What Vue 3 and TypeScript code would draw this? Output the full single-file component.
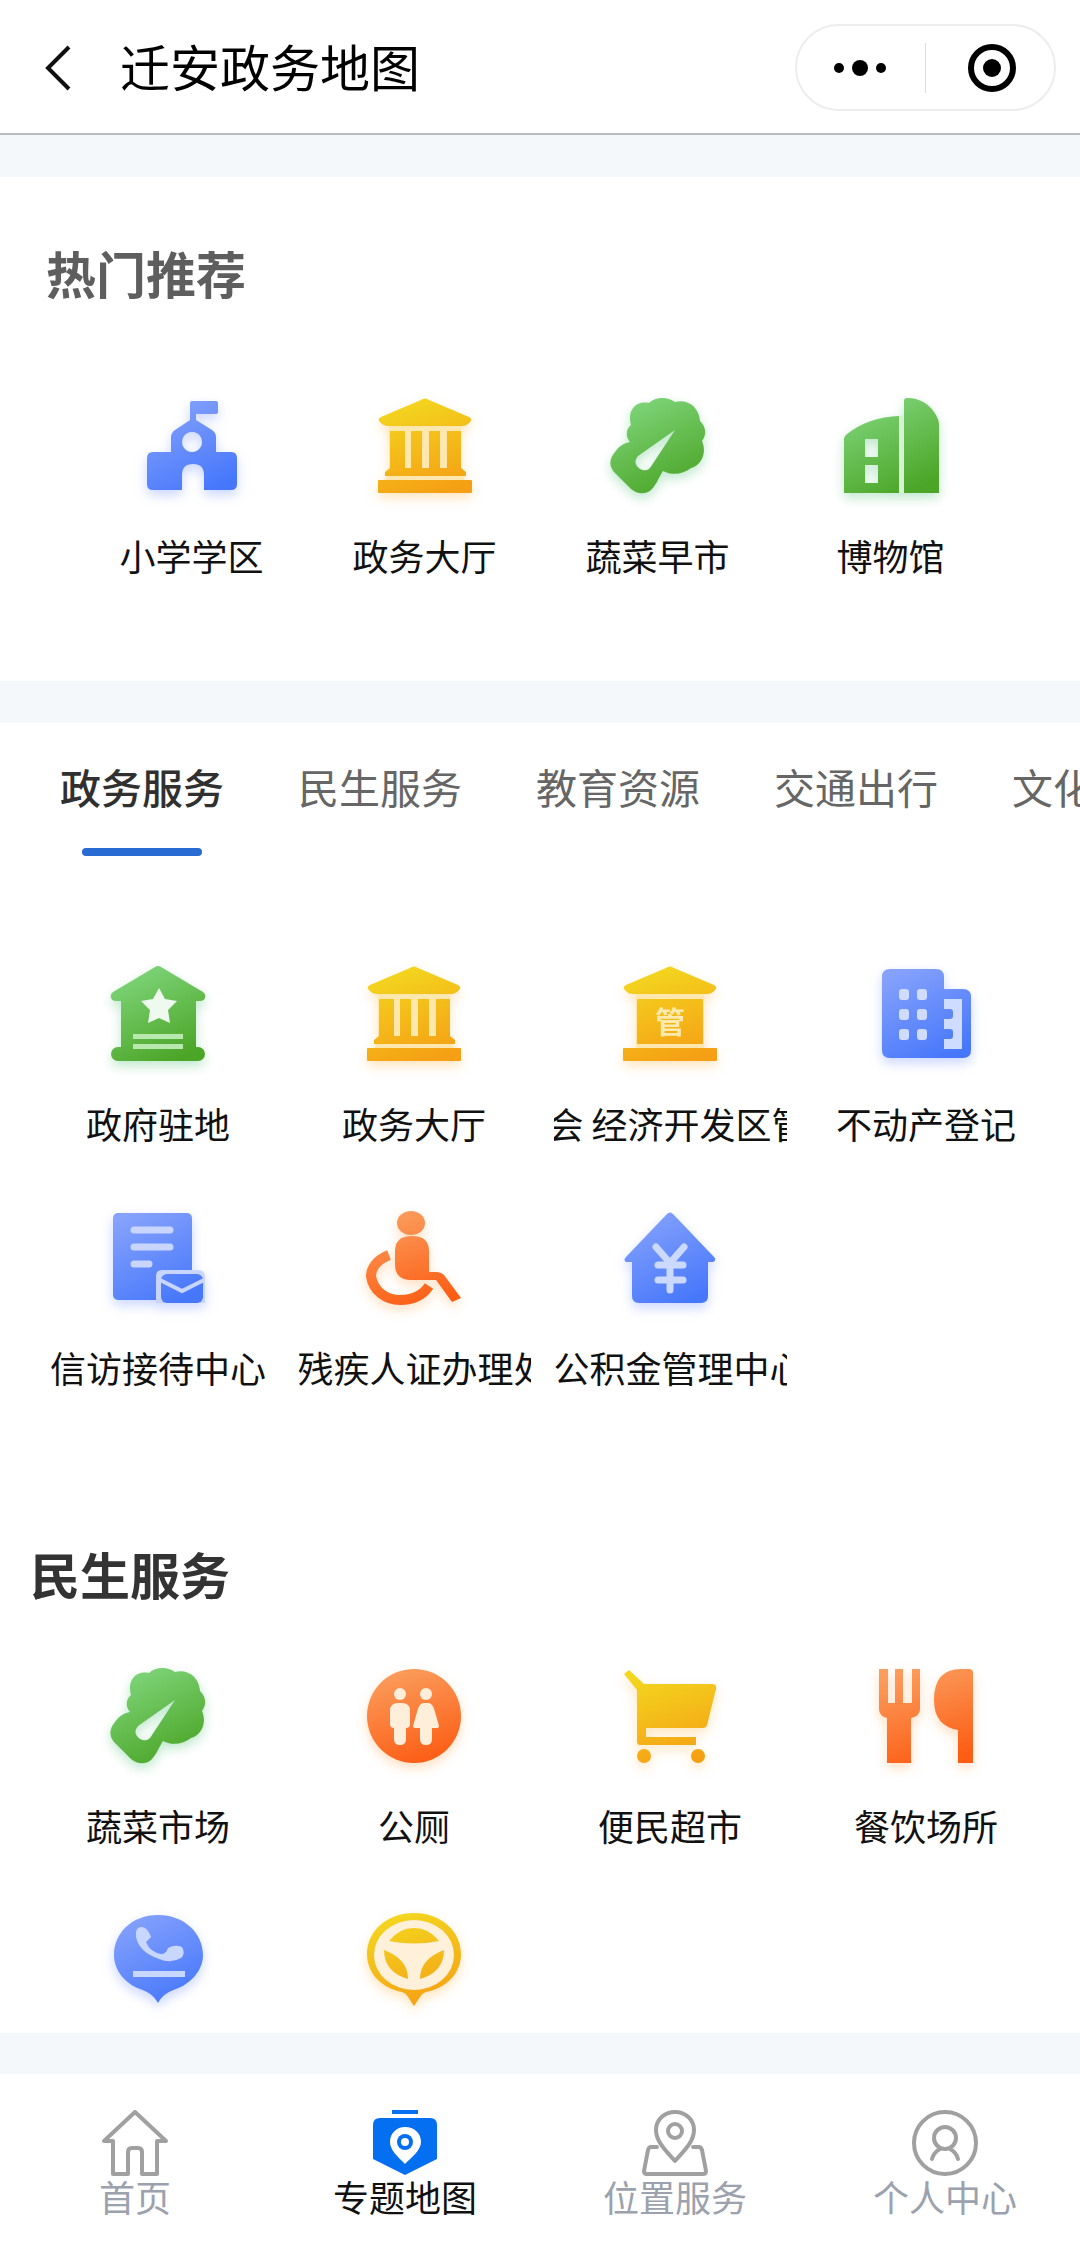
<script setup lang="ts">
import { ref } from 'vue'

type Tone = 'blue' | 'yellow' | 'green' | 'orange'

interface Service {
  icon: string
  label?: string
  /** Current scroll position of a label that is wider than its cell. */
  scroll?: number
}

interface Icon {
  tone: Tone
  art: string
}

const icons: Record<string, Icon> = {
  school: {
    tone: 'blue',
    art: `<path fill-rule="evenodd" d="M58 18q0-2 2-2h24q2 0 2 2v9q0 2-2 2H64v6l16 10q4 3 4 7v15h15q6 0 6 6v26q0 6-6 6H72V90q0-11-11-11T50 90v15H21q-6 0-6-6V73q0-6 6-6h18V52q0-4 4-7l15-10zM60 47a10 10 0 1 0 0.1 0z"/>`,
  },
  hall: {
    tone: 'yellow',
    art: `<path fill="#ffe7ae" d="M24 40h72v46l4 10H20l4-10z"/>
      <path d="M56 15q4-3 8 0l40 17q4 2 1 5-3 4-8 4H23q-5 0-8-4-3-3 1-5z"/>
      <path d="M25 46h15v37h6V46h11v37h7V46h11v37h7V46h14v37l5 4v4H20v-4l5-4z"/>
      <rect x="13" y="95" width="94" height="13" rx="1"/>`,
  },
  vegetable: {
    tone: 'green',
    art: `<path fill-rule="evenodd" d="M32 57C27 51 28 44 33 40 29 26 37 15 51 18 57 12 69 11 77 17 90 14 101 22 102 36 108 42 109 49 104 56 109 67 104 80 93 83 85 89 75 91 65 86 61 92 59 99 53 105 47 110 39 109 33 104L16 87C11 81 11 74 17 67 21 61 26 58 32 57zM77 45L40 71Q34 78 42 84 50 88 54 80z"/>`,
  },
  museum: {
    tone: 'green',
    art: `<path fill="#d5f3d2" d="M67 31h7v77h-7z"/>
      <path fill-rule="evenodd" d="M13 54q0-3 3-5 22-17 52-18v77H13zM34 54v18h13V54zM34 80v18h13V80z"/>
      <path d="M73 16q0-3 3-3 19 0 29 17 3 5 3 9v69H73z"/>`,
  },
  government: {
    tone: 'green',
    art: `<path d="M57 14q3-2 6 0l42 25q3 2 2 6-1 3-5 3h-4v46h2a7 7 0 0 1 0 14H20a7 7 0 0 1 0-14h3V48h-5q-4 0-5-3-1-4 2-6z"/>
      <path fill="#eefaf0" d="M61 35l6 11 12 2-9 9 2 13-11-5-11 5 2-13-9-9 12-2z"/>
      <path fill="#b9e8ae" d="M35 81h50v5H35zM35 91h50v5H35z"/>`,
  },
  committee: {
    tone: 'yellow',
    art: `<path fill="#ffe7ae" d="M26 40h68v56H26z"/>
      <path d="M56 15q4-3 8 0l40 17q4 2 1 5-3 4-8 4H23q-5 0-8-4-3-3 1-5z"/>
      <rect x="27" y="46" width="66" height="45" rx="1"/>
      <rect x="13" y="95" width="94" height="13" rx="1"/>
      <text x="60" y="80" font-size="30" font-weight="700" text-anchor="middle" fill="#ffeaae">管</text>`,
  },
  property: {
    tone: 'blue',
    art: `<path d="M24 16h46q8 0 8 8v12h19q8 0 8 8v53q0 8-8 8H24q-8 0-8-8V24q0-8 8-8z"/>
      <path fill="#cfdcff" d="M78 46h18v50H78V86h6q3 0 3-3v-4q0-3-3-3h-6V66h6q3 0 3-3v-4q0-3-3-3h-6z"/>
      <g fill="#cfdcff"><rect x="33" y="36" width="10" height="11" rx="3"/><rect x="51" y="36" width="10" height="11" rx="3"/>
      <rect x="33" y="56" width="10" height="11" rx="3"/><rect x="51" y="56" width="10" height="11" rx="3"/>
      <rect x="33" y="76" width="10" height="11" rx="3"/><rect x="51" y="76" width="10" height="11" rx="3"/></g>`,
  },
  petition: {
    tone: 'blue',
    art: `<rect x="15" y="16" width="79" height="87" rx="5"/>
      <path fill="#c8d6ff" d="M58 106V79q0-6 6-6h36q7 0 7 7v26z"/>
      <g stroke="#c8d6ff" stroke-width="7" stroke-linecap="round"><path d="M36 33h36M36 50h36M36 67h15"/></g>
      <rect x="63" y="77" width="42" height="29" rx="6"/>
      <path d="M62 83l22 11 22-11" fill="none" stroke="#c8d6ff" stroke-width="4"/>`,
  },
  accessible: {
    tone: 'orange',
    art: `<ellipse cx="57" cy="26" rx="14" ry="12"/>
      <path d="M41 54q0-15 17-15t17 15v21h7q5 0 8 3l17 23-9 4-16-22H57q-16 0-16-16z"/>
      <path d="M35 58C22 63 17 72 17 79 19 94 32 103 46 103 59 103 69 98 75 89" fill="none" stroke="url(#tone-orange)" stroke-width="10"/>`,
  },
  fund: {
    tone: 'blue',
    art: `<path d="M57 17q3-3 6 0l41 43q3 3-1 5h-5v34q0 7-7 7H29q-7 0-7-7V65h-6q-3-2 0-5z"/>
      <path d="M46 50l14 16 14-16M48 68h25M48 83h25M60 66v27" fill="none" stroke="#cbd9ff" stroke-width="7" stroke-linecap="round"/>`,
  },
  toilet: {
    tone: 'orange',
    art: `<circle cx="60" cy="61" r="47"/>
      <g fill="#ffeeda"><circle cx="46" cy="39" r="6"/><circle cx="72" cy="39" r="6"/>
      <path d="M44 48h4q8 0 8 8v13q0 4-4 4v11q0 6-6 6t-6-6V73q-4 0-4-4V56q0-8 8-8z"/>
      <path d="M70 48h4q5 0 7 9l4 14q0 2-3 2h-4v11q0 6-6 6t-6-6V73h-4q-3 0-3-2l4-14q2-9 7-9z"/></g>`,
  },
  market: {
    tone: 'yellow',
    art: `<path fill-rule="evenodd" d="M14 19l5-4 15 14h68q5 0 4 5l-9 36q-1 3-4 3H36v9h50v8H30q-3 0-3-3V35z"/>
      <circle cx="34" cy="101" r="7"/><circle cx="88" cy="101" r="7"/>`,
  },
  dining: {
    tone: 'orange',
    art: `<path d="M13 14h9v34h7V14h8v34h9V14h8v40q0 7-9 9v45H21V63q-8-2-8-9z"/>
      <path d="M103 14q4 0 4 4v90H92V75Q68 71 68 45 68 14 95 14z"/>`,
  },
  hotline: {
    tone: 'blue',
    art: `<path d="M60 16c26 0 45 18 45 40 0 16-13 29-27 34-9 3-14 7-18 14-4-7-9-11-18-14-14-5-26-18-26-34 0-22 18-40 44-40z"/>
      <path fill="#c8d7ff" d="M38 38Q37 27 44 28 50 29 53 38L48 43Q52 53 63 55 68 55 70 49 77 45 84 48 88 55 83 59 73 65 61 60 41 53 38 38z"/>
      <path fill="#c8d7ff" d="M35 72h52v6H35z"/>`,
  },
  driving: {
    tone: 'yellow',
    art: `<path d="M60 14c27 0 47 18 47 41 0 20-15 34-35 38-6 2-8 9-12 14-4-5-6-12-12-14-20-4-35-18-35-38 0-23 20-41 47-41z"/>
      <ellipse cx="60" cy="56" rx="40" ry="35" fill="#fff0da"/>
      <path d="M35 42q10-13 25-13t25 13q-25 5-50 0zM30 51q0 22 24 29 0-20-24-29zM90 51q0 22-24 29 0-20 24-29z"/>`,
  },
}

const recommended: Service[] = [
  { icon: 'school', label: '小学学区' },
  { icon: 'hall', label: '政务大厅' },
  { icon: 'vegetable', label: '蔬菜早市' },
  { icon: 'museum', label: '博物馆' },
]

const governmentServices: Service[] = [
  { icon: 'government', label: '政府驻地' },
  { icon: 'hall', label: '政务大厅' },
  { icon: 'committee', label: '会 经济开发区管', scroll: 6 },
  { icon: 'property', label: '不动产登记' },
  { icon: 'petition', label: '信访接待中心' },
  { icon: 'accessible', label: '残疾人证办理处' },
  { icon: 'fund', label: '公积金管理中心' },
]

const livelihoodServices: Service[] = [
  { icon: 'vegetable', label: '蔬菜市场' },
  { icon: 'toilet', label: '公厕' },
  { icon: 'market', label: '便民超市' },
  { icon: 'dining', label: '餐饮场所' },
  { icon: 'hotline' },
  { icon: 'driving' },
]

const groups = [
  { title: '', items: governmentServices },
  { title: '民生服务', items: livelihoodServices },
]

const categories = ['政务服务', '民生服务', '教育资源', '交通出行', '文化旅游']
const activeCategory = ref(0)

const pages = [
  {
    label: '首页',
    art: `<path d="M33 2L2 31h9v33h15V42q0-4 4-4h6q4 0 4 4v22h15V31h9z"/>`,
  },
  {
    label: '专题地图',
    art: `<g fill="#046ff0" stroke="none"><path d="M20 0h26v4H20zM8 8h50q7 0 7 7v34L33 65 1 49V15q0-7 7-7z"/>
      <path fill="#fff" d="M33 17c9 0 16 6 16 15 0 8-9 15-16 22-7-7-15-14-15-22 0-9 7-15 15-15z"/>
      <circle cx="33" cy="32" r="8"/><circle cx="33" cy="32" r="4" fill="#fff"/></g>`,
  },
  {
    label: '位置服务',
    art: `<path d="M33 2c11 0 19 8 19 18 0 12-11 22-19 31-8-9-19-19-19-31C14 10 22 2 33 2z"/><circle cx="33" cy="21" r="7"/>
      <path d="M15 37H9q-2 0-3 3L2 61q0 3 3 3h56q3 0 3-3l-4-21q-1-3-3-3h-6"/>`,
  },
  {
    label: '个人中心',
    art: `<circle cx="33" cy="33" r="31"/><circle cx="33" cy="28" r="11"/><path d="M20 49q2-7 8-10M46 49q-2-7-8-10"/>`,
  },
]
const activePage = 1
</script>

<template>
  <div class="page">
    <svg class="tones" width="0" height="0" aria-hidden="true">
      <defs>
        <linearGradient id="tone-blue" gradientUnits="userSpaceOnUse" x1="35" y1="15" x2="80" y2="105">
          <stop offset="0" stop-color="#86a2fc" /><stop offset="1" stop-color="#4677fb" />
        </linearGradient>
        <linearGradient id="tone-yellow" gradientUnits="userSpaceOnUse" x1="45" y1="13" x2="75" y2="107">
          <stop offset="0" stop-color="#f3d71f" /><stop offset="1" stop-color="#f5a014" />
        </linearGradient>
        <linearGradient id="tone-green" gradientUnits="userSpaceOnUse" x1="35" y1="13" x2="80" y2="107">
          <stop offset="0" stop-color="#80d67c" /><stop offset="1" stop-color="#4ba526" />
        </linearGradient>
        <linearGradient id="tone-orange" gradientUnits="userSpaceOnUse" x1="45" y1="13" x2="75" y2="107">
          <stop offset="0" stop-color="#fb9d5d" /><stop offset="1" stop-color="#fc5d14" />
        </linearGradient>
      </defs>
    </svg>

    <header class="top-bar">
      <button class="back" type="button" aria-label="返回">
        <svg width="32" height="50" viewBox="0 0 32 50"><path d="M27 4L6 25l21 21" fill="none" stroke="#111" stroke-width="4" /></svg>
      </button>
      <h1>迁安政务地图</h1>
      <div class="capsule">
        <button type="button" aria-label="更多">
          <svg width="58" height="50" viewBox="0 0 58 50"><circle cx="7" cy="25" r="5" /><circle cx="28" cy="25" r="8" /><circle cx="49" cy="25" r="5" /></svg>
        </button>
        <span class="divider"></span>
        <button type="button" aria-label="关闭">
          <svg width="54" height="50" viewBox="0 0 54 50"><circle cx="29" cy="25" r="21" fill="none" stroke="#000" stroke-width="6" /><circle cx="29" cy="25" r="9" /></svg>
        </button>
      </div>
    </header>

    <section class="recommended">
      <h2>热门推荐</h2>
      <div class="grid">
        <a v-for="item in recommended" :key="item.icon" class="service" href="#">
          <svg class="icon" :class="icons[item.icon].tone" viewBox="0 0 120 120" v-html="icons[item.icon].art"></svg>
          <span class="label"><span>{{ item.label }}</span></span>
        </a>
      </div>
    </section>

    <main class="services">
      <div class="categories" role="tablist">
        <button
          v-for="(name, i) in categories"
          :key="name"
          type="button"
          role="tab"
          :aria-selected="i === activeCategory"
          :class="{ active: i === activeCategory }"
          @click="activeCategory = i"
        >
          {{ name }}
        </button>
      </div>
      <div v-for="(group, g) in groups" :key="g" class="group">
        <h2 v-if="group.title">{{ group.title }}</h2>
        <div class="grid">
          <a v-for="item in group.items" :key="item.icon" class="service" href="#">
            <svg class="icon" :class="icons[item.icon].tone" viewBox="0 0 120 120" v-html="icons[item.icon].art"></svg>
            <span v-if="item.label" class="label">
              <span :style="item.scroll ? { marginLeft: `-${item.scroll}px` } : undefined">{{ item.label }}</span>
            </span>
          </a>
        </div>
      </div>
    </main>

    <nav class="tab-bar">
      <a v-for="(page, i) in pages" :key="page.label" href="#" :class="{ active: i === activePage }">
        <svg viewBox="0 0 66 66" v-html="page.art"></svg>
        <span>{{ page.label }}</span>
      </a>
    </nav>
  </div>
</template>

<style>
body {
  margin: 0;
  background: #f4f8fb;
}
</style>

<style scoped>
.page {
  display: flex;
  flex-direction: column;
  min-height: 100vh;
  overflow: hidden;
  background: #f4f8fb;
  color: #111;
  font-family: "Noto Sans CJK SC", "Noto Sans", sans-serif;
  font-size: 36px;
}

.tones {
  position: absolute;
}

button {
  padding: 0;
  border: 0;
  background: none;
  font: inherit;
  color: inherit;
}

a {
  color: inherit;
  text-decoration: none;
}

h1,
h2 {
  margin: 0;
  font-size: 50px;
  line-height: 70px;
}

svg {
  display: block;
}

.top-bar {
  display: flex;
  align-items: center;
  box-sizing: border-box;
  height: 135px;
  padding: 2px 24px 0 42px;
  border-bottom: 2px solid #b9bcbe;
  background: #fff;
}

h1 {
  flex: 1;
  margin: 0 0 6px 46px;
  font-weight: 400;
  color: #000;
}

.capsule {
  display: flex;
  align-items: center;
  box-sizing: border-box;
  width: 261px;
  height: 87px;
  border: 2px solid #ededed;
  border-radius: 44px;
}

.capsule button {
  display: flex;
  flex: 1;
  justify-content: center;
}

.divider {
  width: 1px;
  height: 50px;
  background: #dcdcdc;
}

.recommended {
  margin-top: 42px;
  padding: 60px 73px 99px 75px;
  background: #fff;
}

.recommended h2 {
  margin: 0 -29px 78px;
  color: #5e5e5e;
}

.grid {
  display: grid;
  grid-template-columns: repeat(4, minmax(0, 1fr));
  row-gap: 47px;
}

.service {
  display: flex;
  flex-direction: column;
  align-items: center;
  gap: 23px;
}

.icon {
  width: 120px;
  height: 120px;
}

.blue {
  fill: url(#tone-blue);
  filter: drop-shadow(0 5px 6px rgba(80, 120, 255, 0.3));
}

.yellow {
  fill: url(#tone-yellow);
  filter: drop-shadow(0 5px 6px rgba(255, 170, 40, 0.3));
}

.green {
  fill: url(#tone-green);
  filter: drop-shadow(0 5px 6px rgba(70, 190, 110, 0.35));
}

.orange {
  fill: url(#tone-orange);
  filter: drop-shadow(0 5px 6px rgba(255, 150, 50, 0.3));
}

.label {
  display: flex;
  max-width: 233px;
  overflow: hidden;
  line-height: 54px;
  white-space: nowrap;
}

.services {
  flex: 1;
  margin-top: 42px;
  padding: 33px 0 12px;
  background: #fff;
}

.categories {
  display: flex;
  margin-bottom: 97px;
  padding-left: 23px;
  overflow: hidden;
}

.categories button {
  display: flex;
  flex: none;
  flex-direction: column;
  align-items: center;
  gap: 32px;
  padding: 0 37px;
  font-size: 41px;
  line-height: 60px;
  color: #666;
}

.categories button::after {
  content: "";
  width: 120px;
  height: 8px;
  border-radius: 4px;
}

.categories .active {
  font-weight: 500;
  color: #303030;
}

.categories .active::after {
  background: #286bd2;
}

.group {
  padding: 0 26px 0 30px;
}

.group + .group {
  margin-top: 144px;
}

.group h2 {
  margin-bottom: 47px;
  color: #333;
}

.tab-bar {
  display: flex;
  margin-top: 41px;
  padding: 36px 0;
  background: #fff;
  color: #9ba2ad;
}

.tab-bar a {
  display: flex;
  flex: 1;
  flex-direction: column;
  align-items: center;
  line-height: 40px;
}

.tab-bar svg {
  width: 66px;
  height: 66px;
  fill: none;
  stroke: #a0a0a0;
  stroke-width: 4;
  stroke-linejoin: round;
  stroke-linecap: round;
}

.tab-bar .active {
  color: #111;
}
</style>
